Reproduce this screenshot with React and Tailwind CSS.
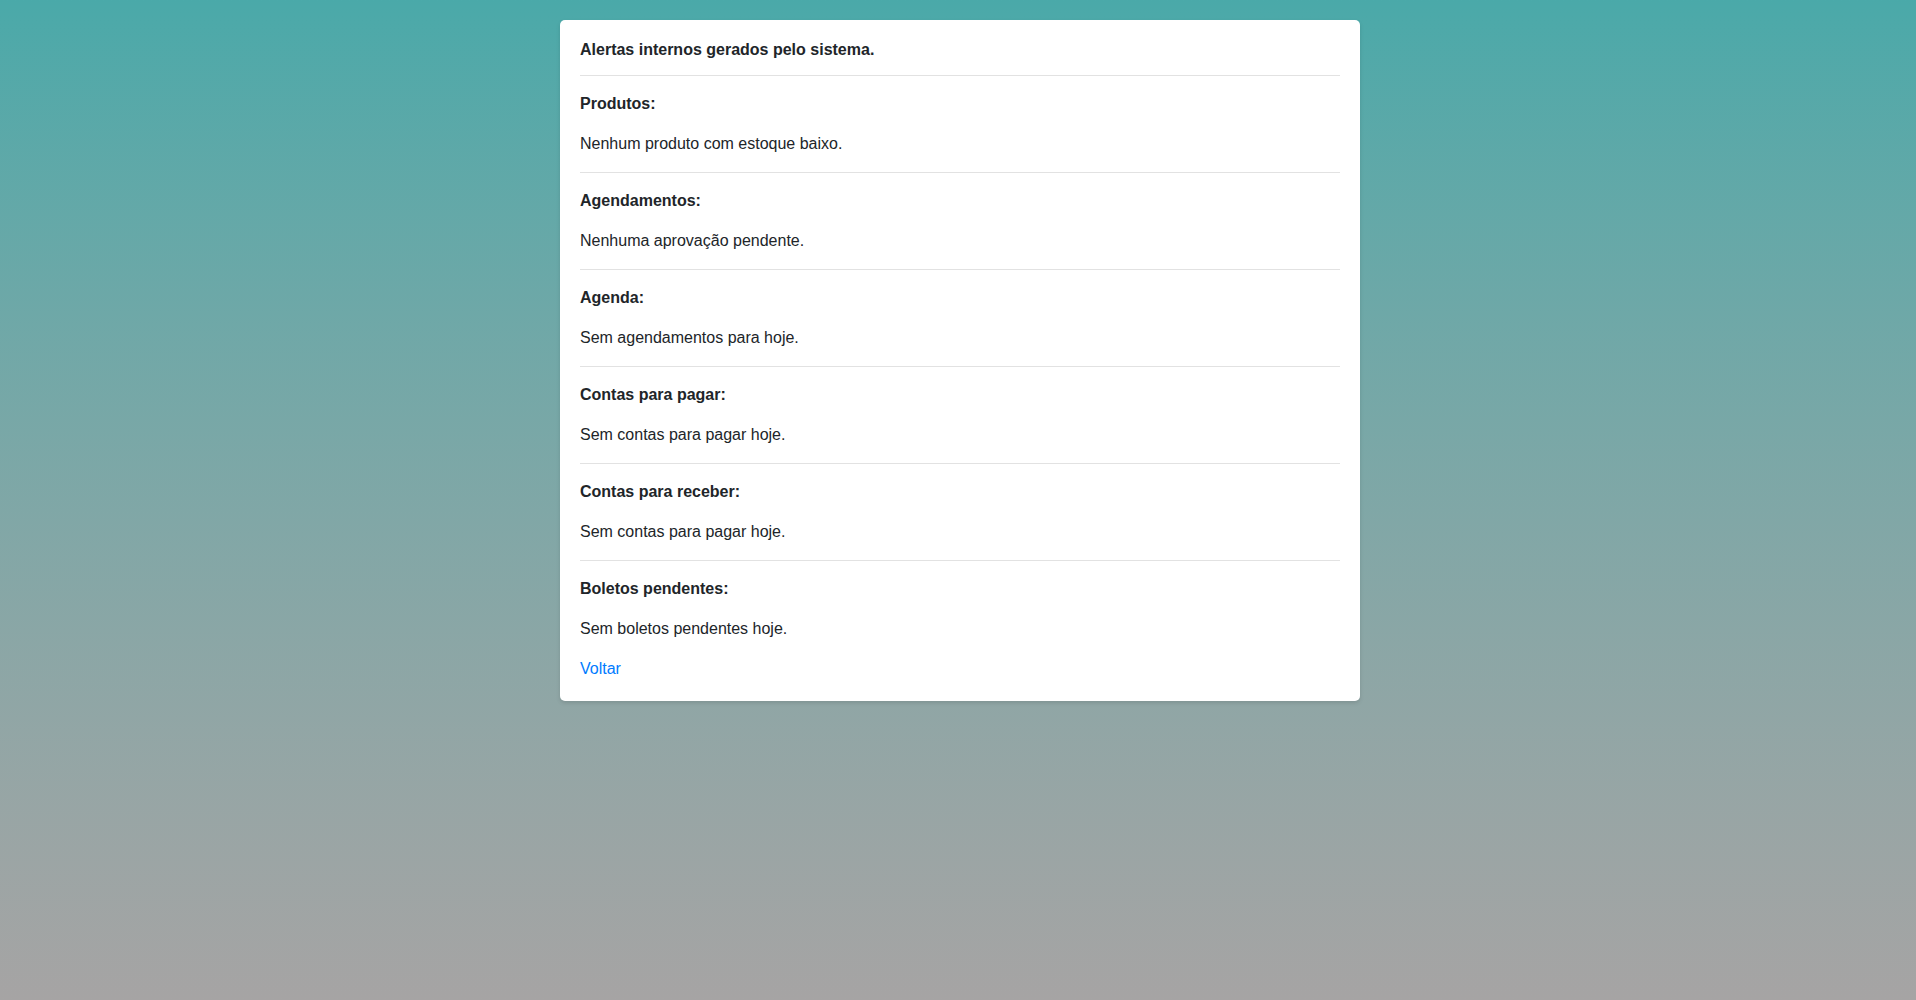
import React from "react";

const sections = [
  ["Produtos:", "Nenhum produto com estoque baixo."],
  ["Agendamentos:", "Nenhuma aprovação pendente."],
  ["Agenda:", "Sem agendamentos para hoje."],
  ["Contas para pagar:", "Sem contas para pagar hoje."],
  ["Contas para receber:", "Sem contas para pagar hoje."],
  ["Boletos pendentes:", "Sem boletos pendentes hoje."],
];

export default function App() {
  return (
    <div
      className="flex min-h-[1000px] w-full items-start justify-center bg-gradient-to-b from-[#4aa9a9] to-[#a6a4a4] pt-[20px] pl-[4px] text-[16px] leading-[19px] text-[#212529]"
      style={{ fontFamily: '"Liberation Sans", Arial, sans-serif' }}
    >
      <div className="w-[800px] rounded-[5px] bg-white px-[20px] pt-[20px] pb-[23px] shadow-[0_2px_4px_rgba(0,0,0,0.12)]">
        <div className="mb-[16px] font-bold">Alertas internos gerados pelo sistema.</div>
        {sections.map(([h, p], i) => (
          <div
            key={h}
            className={
              i === sections.length - 1
                ? "border-t border-[#e2e2e2] pt-[18px]"
                : "border-t border-[#e2e2e2] pt-[18px] pb-[19px]"
            }
          >
            <div className="mb-[21px] font-bold">{h}</div>
            <div>{p}</div>
          </div>
        ))}
        <div className="mt-[21px]">
          <a href="#" className="text-[#007bff]">Voltar</a>
        </div>
      </div>
    </div>
  );
}
